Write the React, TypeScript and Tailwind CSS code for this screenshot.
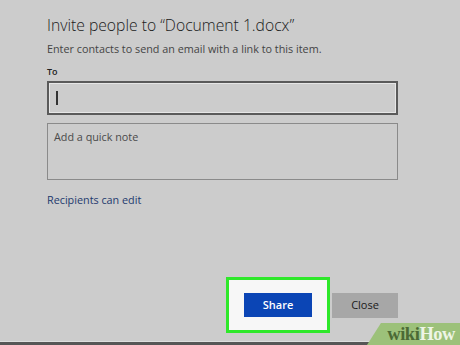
import React from 'react'

function WikiBadge() {
  return (
    <div className="absolute right-0 bottom-0 h-[22px] w-[93px]">
      <div className="absolute inset-0 bg-[#9cc17a] [clip-path:polygon(15%_0,100%_0,100%_100%,0_100%)]" />
      <div className="relative flex h-full items-center justify-end pr-[5px] font-['Liberation_Serif',serif] text-[18.5px] font-bold leading-none tracking-tight">
        <span className="text-[#4b6a34]">wiki</span>
        <span className="text-[#eef5e6]">How</span>
      </div>
    </div>
  )
}

export default function App() {
  return (
    <div className="relative flex h-[345px] w-[460px] flex-col overflow-hidden bg-[#cccccc] font-['Open_Sans',sans-serif]">
      <div className="flex flex-1 flex-col pl-[47px] pr-[62px] pt-[13px]">
        <h1 className="text-[15.7px] font-light leading-[24px] text-[#1a1a1a]">
          Invite people to “Document 1.docx”
        </h1>
        <p className="mt-[4px] text-[10.8px] leading-[16px] text-[#444444]">
          Enter contacts to send an email with a link to this item.
        </p>
        <label className="mt-[8px] text-[9px] font-semibold leading-[14px] text-[#222222]">
          To
        </label>
        <div className="mt-[2px] flex h-[34px] items-center border-2 border-[#5a5a5a] px-[7px] shadow-[inset_0_0_0_1px_#e6e6e6]">
          <span className="h-[14px] w-[2px] bg-[#333333]" />
        </div>
        <div className="mt-[8px] h-[57px] border border-[#8a8a8a] px-[6px] pt-[5px] text-[10.8px] leading-[16px] text-[#4a4a4a]">
          Add a quick note
        </div>
        <a className="mt-[12px] text-[10.8px] leading-[16px] text-[#1e3a6e]">
          Recipients can edit
        </a>
        <div className="mt-auto mb-[8px] flex items-center justify-end">
          <div className="flex h-[56px] w-[104px] items-center justify-center border-[3px] border-[#2ee82a] bg-[#f7f7f7]">
            <button className="h-[24px] w-[68px] bg-[#0b45b5] text-[11px] font-semibold text-white">
              Share
            </button>
          </div>
          <button className="ml-[2px] h-[25px] w-[66px] bg-[#a7a7a7] text-[11px] font-medium text-[#1a1a1a]">
            Close
          </button>
        </div>
      </div>
      <div className="h-[1px] bg-[#dedede]" />
      <div className="h-[3px] bg-[#565656]" />
      <WikiBadge />
    </div>
  )
}
